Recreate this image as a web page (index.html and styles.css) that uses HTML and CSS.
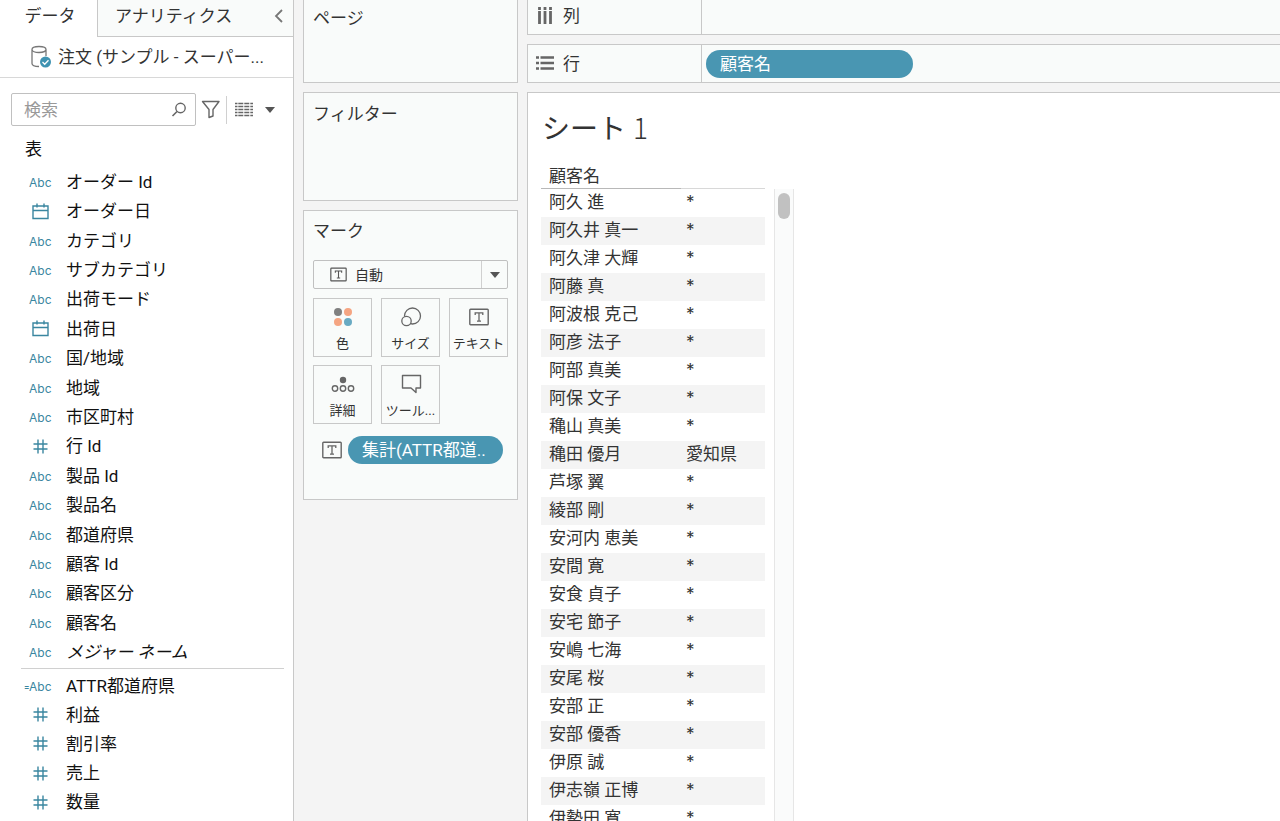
FILE: index.html
```html
<!DOCTYPE html>
<html lang="ja">
<head>
<meta charset="utf-8">
<title>シート 1</title>
<link rel="stylesheet" href="styles.css">
</head>
<body>
<svg class="sprite" aria-hidden="true">
  <symbol id="date" viewBox="0 0 17 17"><path d="M1 3h15v12.500h-15zM1 7.500h15M5 .5v4M12 .5v4" fill="none" stroke="currentColor" stroke-width="1.400"/></symbol>
  <symbol id="number" viewBox="0 0 17 17"><path d="M6 1.500v14M11 1.500v14M1.500 6h14M1.500 11h14" fill="none" stroke="currentColor" stroke-width="1.400"/></symbol>
  <symbol id="text" viewBox="0 0 20 18"><rect x=".8" y="1.300" width="18.400" height="15.400" rx=".8" fill="none" stroke="currentColor" stroke-width="1.400"/><path d="M6.200 7V4.800h7.600V7M10 4.800v8.400M8 13.200h4" fill="none" stroke="currentColor" stroke-width="1.300"/></symbol>
  <symbol id="caret" viewBox="0 0 10 6"><path d="M0 0h10L5 6z" fill="currentColor"/></symbol>
</svg>
<div class="app">
  <aside class="data-pane">
    <div class="tabs">
      <button class="tab tab-active" type="button">データ</button>
      <div class="tab-rest">
        <button class="tab" type="button">アナリティクス</button>
        <button class="collapse" type="button" aria-label="折りたたむ"><svg width="10" height="14" viewBox="0 0 10 14"><path d="M8 1L2 7l6 6" fill="none" stroke="#777" stroke-width="1.800"/></svg></button>
      </div>
    </div>
    <button class="source" type="button">
      <svg width="22" height="24" viewBox="0 0 22 24"><path d="M9 21.500C4 21.500 2 20 2 18.500V4.500C2 2.800 5 1.500 9 1.500s7 1.300 7 3-3 3-7 3-7-1.300-7-3M16 4.500V11" fill="none" stroke="#777" stroke-width="1.300"/><circle cx="15.500" cy="17" r="5.500" fill="#3f93b2"/><path d="M12.500 17l2.200 2.200 3.800-4" fill="none" stroke="#fff" stroke-width="1.300"/></svg>
      <span>注文 (サンプル - スーパー...</span>
    </button>
    <div class="tools">
      <label class="search"><input type="text" placeholder="検索" aria-label="検索"><svg width="16" height="16" viewBox="0 0 16 16"><circle cx="9.500" cy="6" r="4.700" fill="none" stroke="#666" stroke-width="1.400"/><path d="M6 9.500L1.500 14" stroke="#666" stroke-width="1.600"/></svg></label>
      <button class="filter" type="button" aria-label="フィルター"><svg width="20" height="19" viewBox="0 0 20 19"><path d="M1.500 1.500h16.500L12 9.500V16l-4 1.500v-8z" fill="none" stroke="#666" stroke-width="1.400" stroke-linejoin="round"/></svg></button>
      <button class="view" type="button" aria-label="表示"><svg width="18" height="15" viewBox="0 0 18 15"><path d="M0 1.500h18M0 4.500h18M0 7.500h18M0 10.500h18M0 13.500h18" stroke="#666" stroke-width="1.500" stroke-dasharray="2.500 .8 5 1 5 1 5 9"/></svg><svg class="gray" width="10" height="6"><use href="#caret"/></svg></button>
    </div>
    <h2 class="group">表</h2>
    <ul class="fields dimensions">
      <li><i>Abc</i>オーダー Id</li>
      <li><svg><use href="#date"/></svg>オーダー日</li>
      <li><i>Abc</i>カテゴリ</li>
      <li><i>Abc</i>サブカテゴリ</li>
      <li><i>Abc</i>出荷モード</li>
      <li><svg><use href="#date"/></svg>出荷日</li>
      <li><i>Abc</i>国/地域</li>
      <li><i>Abc</i>地域</li>
      <li><i>Abc</i>市区町村</li>
      <li><svg><use href="#number"/></svg>行 Id</li>
      <li><i>Abc</i>製品 Id</li>
      <li><i>Abc</i>製品名</li>
      <li><i>Abc</i>都道府県</li>
      <li><i>Abc</i>顧客 Id</li>
      <li><i>Abc</i>顧客区分</li>
      <li><i>Abc</i>顧客名</li>
      <li><i>Abc</i><em>メジャー ネーム</em></li>
    </ul>
    <ul class="fields measures">
      <li><i class="calc"><b>=</b>Abc</i>ATTR都道府県</li>
      <li><svg><use href="#number"/></svg>利益</li>
      <li><svg><use href="#number"/></svg>割引率</li>
      <li><svg><use href="#number"/></svg>売上</li>
      <li><svg><use href="#number"/></svg>数量</li>
    </ul>
  </aside>
  <section class="cards">
    <div class="card pages"><h3>ページ</h3></div>
    <div class="card filters"><h3>フィルター</h3></div>
    <div class="card marks">
      <h3>マーク</h3>
      <div class="mark-type">
        <svg width="17" height="15"><use href="#text"/></svg>
        <select aria-label="マーク"><option>自動</option></select>
        <span class="arrow"><svg width="10" height="6"><use href="#caret"/></svg></span>
      </div>
      <div class="mark-buttons">
        <button type="button"><svg width="20" height="22" viewBox="0 0 20 22"><circle cx="5" cy="6" r="4" fill="#808080"/><circle cx="15" cy="6" r="4" fill="#f5a582"/><circle cx="5" cy="16" r="4" fill="#f5a582"/><circle cx="15" cy="16" r="4" fill="#69aac3"/></svg>色</button>
        <button type="button"><svg width="22" height="22" viewBox="0 0 22 22"><circle cx="12.500" cy="10" r="8" fill="none" stroke="#666" stroke-width="1.300"/><circle cx="6.500" cy="15" r="4.700" fill="#f9fbfa" stroke="#666" stroke-width="1.300"/></svg>サイズ</button>
        <button type="button"><svg width="20" height="22"><use href="#text"/></svg>テキスト</button>
        <button type="button"><svg width="24" height="22" viewBox="0 0 24 22"><circle cx="12" cy="7" r="3.200" fill="#666"/><g fill="none" stroke="#666" stroke-width="1.400"><circle cx="4" cy="15.500" r="2.700"/><circle cx="12" cy="15.500" r="2.700"/><circle cx="20" cy="15.500" r="2.700"/></g></svg>詳細</button>
        <button type="button"><svg width="22" height="22" viewBox="0 0 22 22"><path d="M2.500 2.500h18v12.500h-4.500v4.500l-5-4.500h-8.500z" fill="none" stroke="#666" stroke-width="1.400" stroke-linejoin="round"/></svg>ツール...</button>
      </div>
      <div class="encoding">
        <svg width="20" height="18"><use href="#text"/></svg>
        <button class="pill" type="button">集計(ATTR都道..</button>
      </div>
    </div>
  </section>
  <main class="workspace">
    <div class="shelf columns">
      <div class="shelf-label"><svg width="18" height="18" viewBox="0 0 18 18"><path d="M3.500 0v3M9 0v3M14.500 0v3M3.500 4v13M9 4v13M14.500 4v13" stroke="#666" stroke-width="2.800"/></svg>列</div>
    </div>
    <div class="shelf rows">
      <div class="shelf-label"><svg width="18" height="18" viewBox="0 0 18 18"><path d="M0 2.500h3M4.500 2.500H18M0 8h3M4.500 8H18M0 13.500h3M4.500 13.500H18" stroke="#666" stroke-width="2.600"/></svg>行</div>
      <button class="pill" type="button">顧客名</button>
    </div>
    <div class="sheet">
      <h1>シート <span>1</span></h1>
      <div class="view-area">
        <table>
          <thead><tr><th>顧客名</th><th></th></tr></thead>
          <tbody>
            <tr><td>阿久 進</td><td>*</td></tr>
            <tr><td>阿久井 真一</td><td>*</td></tr>
            <tr><td>阿久津 大輝</td><td>*</td></tr>
            <tr><td>阿藤 真</td><td>*</td></tr>
            <tr><td>阿波根 克己</td><td>*</td></tr>
            <tr><td>阿彦 法子</td><td>*</td></tr>
            <tr><td>阿部 真美</td><td>*</td></tr>
            <tr><td>阿保 文子</td><td>*</td></tr>
            <tr><td>穐山 真美</td><td>*</td></tr>
            <tr><td>穐田 優月</td><td>愛知県</td></tr>
            <tr><td>芦塚 翼</td><td>*</td></tr>
            <tr><td>綾部 剛</td><td>*</td></tr>
            <tr><td>安河内 恵美</td><td>*</td></tr>
            <tr><td>安間 寛</td><td>*</td></tr>
            <tr><td>安食 貞子</td><td>*</td></tr>
            <tr><td>安宅 節子</td><td>*</td></tr>
            <tr><td>安嶋 七海</td><td>*</td></tr>
            <tr><td>安尾 桜</td><td>*</td></tr>
            <tr><td>安部 正</td><td>*</td></tr>
            <tr><td>安部 優香</td><td>*</td></tr>
            <tr><td>伊原 誠</td><td>*</td></tr>
            <tr><td>伊志嶺 正博</td><td>*</td></tr>
            <tr><td>伊勢田 寛</td><td>*</td></tr>
          </tbody>
        </table>
        <div class="scrollbar"><div class="thumb"></div></div>
      </div>
    </div>
  </main>
</div>
</body>
</html>
```
FILE: styles.css
```css
* { box-sizing: border-box; }
body {
  margin: 0;
  background: #f4f4f4;
  color: #333;
  font-family: Roboto, "Noto Sans CJK JP", sans-serif;
  font-size: 17px;
  line-height: 24px;
}
button, input, select { font: inherit; color: inherit; }
button { border: 0; background: none; padding: 0; }
h1, h2, h3, ul { margin: 0; padding: 0; font-weight: 400; font-size: 17px; }
svg { display: block; flex: none; }
.sprite { position: absolute; width: 0; height: 0; }

.app { display: flex; height: 100vh; overflow: hidden; }

.data-pane { flex: none; width: 294px; background: #fff; border-right: 1px solid #c8c8c8; }
.tabs { display: flex; height: 37px; }
.tab { padding-bottom: 5px; white-space: nowrap; }
.tab-active { width: 97px; padding-left: 3px; }
.tab-rest {
  flex: 1;
  display: flex;
  justify-content: space-between;
  padding: 0 9px 0 17px;
  background: #f9fbfa;
  border-left: 1px solid #c8c8c8;
  border-bottom: 1px solid #c8c8c8;
}
.collapse { padding-bottom: 5px; }
.source {
  display: flex;
  align-items: center;
  gap: 6px;
  width: 100%;
  height: 41px;
  padding-left: 30px;
  border-bottom: 1px solid #d8d8d8;
  white-space: nowrap;
}
.tools { display: flex; align-items: center; padding: 15px 0 0 11px; }
.search {
  display: flex;
  align-items: center;
  width: 185px;
  height: 33px;
  padding: 0 8px 0 12px;
  border: 1px solid #c0c0c0;
  border-radius: 2px;
}
.search input { flex: 1; min-width: 0; border: 0; outline: 0; padding: 0; background: none; }
.search input::placeholder { color: #999; opacity: 1; }
.filter { padding: 0 5px; }
.view {
  display: flex;
  align-items: center;
  gap: 12px;
  height: 28px;
  padding-left: 8px;
  border-left: 1px solid #d0d0d0;
  color: #555;
}
.group { padding: 11px 0 6px 25px; color: #111; }
.fields { display: grid; grid-auto-rows: 1fr; list-style: none; color: #111; }
.fields li { display: flex; align-items: center; white-space: nowrap; padding-left: 29px; }
.fields i { width: 37px; padding-top: 2px; font-family: Inter, sans-serif; font-size: 12px; font-style: normal; color: #3a86a0; }
.calc { display: flex; align-items: center; }
.fields .calc { width: 42px; margin-left: -5px; }
.calc b { width: 5px; font-size: 8px; }
.fields svg { width: 17px; height: 17px; margin: 0 17px 0 3px; color: #3a86a0; }
.dimensions { min-height: 500px; }
.measures { min-height: 149px; margin: 1px 9px 0 21px; padding-top: 2px; border-top: 1px solid #d0d0d0; }
.measures li { padding-left: 8px; }

.cards { flex: none; width: 215px; margin-left: 9px; display: flex; flex-direction: column; gap: 9px; }
.card { background: #f9fbfa; border: 1px solid #c8c8c8; padding: 8px 9px; }
.pages { height: 83px; border-top: 0; padding-top: 6px; }
.filters { height: 109px; padding-top: 9px; }
.marks { height: 290px; }
.marks h3 { padding-bottom: 17px; }
.mark-type {
  display: grid;
  grid-template-columns: 17px 1fr 26px;
  align-items: center;
  height: 29px;
  padding-left: 16px;
  border: 1px solid #c0c0c0;
  border-radius: 2px;
  color: #555;
}
.mark-type select {
  appearance: none;
  border: 0;
  background: none;
  padding: 0 0 0 8px;
  font-size: 14px;
  color: #333;
}
.arrow { display: grid; place-items: center; height: 100%; border-left: 1px solid #d0d0d0; }
.mark-buttons { display: grid; grid-template-columns: repeat(3, 1fr); gap: 8px 9px; padding-top: 9px; }
.mark-buttons button {
  display: flex;
  flex-direction: column;
  align-items: center;
  gap: 6px;
  height: 59px;
  padding-top: 7px;
  border: 1px solid #c8c8c8;
  font-size: 13px;
  line-height: 20px;
  white-space: nowrap;
}
.mark-buttons svg, .encoding svg { color: #666; }
.encoding { display: flex; align-items: center; gap: 6px; padding: 12px 5px 0 9px; }
.pill {
  height: 28px;
  padding: 0 14px;
  border-radius: 14px;
  background: #4996b2;
  color: #fff;
  text-align: left;
  white-space: nowrap;
}
.encoding .pill { flex: 1; }

.workspace { flex: 1; min-width: 0; margin-left: 9px; display: flex; flex-direction: column; }
.shelf {
  flex: none;
  display: flex;
  align-items: center;
  background: #f9fbfa;
  border: 1px solid #c8c8c8;
  border-right: 0;
}
.columns { height: 35px; margin-bottom: 9px; border-top: 0; }
.rows { height: 39px; margin-bottom: 9px; }
.shelf-label {
  display: flex;
  align-items: center;
  gap: 9px;
  align-self: stretch;
  width: 174px;
  padding-left: 8px;
  border-right: 1px solid #c8c8c8;
}
.columns .shelf-label { padding-bottom: 3px; }
.rows .pill { width: 207px; margin-left: 4px; }
.sheet {
  flex: 1;
  min-height: 0;
  overflow: hidden;
  display: flex;
  flex-direction: column;
  padding: 14px 0 0 13px;
  background: #fff;
  border: 1px solid #c8c8c8;
  border-width: 1px 0 0 1px;
}
h1 { flex: none; padding-left: 1px; font-size: 28px; line-height: 40px; }
h1 span { font-family: "Noto Sans CJK JP", sans-serif; font-weight: 300; }
.view-area { display: flex; }
table { width: 224px; table-layout: fixed; border-collapse: separate; border-spacing: 0; }
th, td { height: 28px; padding: 0 0 2px 8px; text-align: left; font-weight: 400; white-space: nowrap; line-height: 24px; }
th { height: 39px; padding: 14px 0 0 8px; border-bottom: 1px solid #d8d8d8; }
th:first-child { width: 140px; border-color: #b8b8b8; }
td + td { padding-left: 5px; font-family: Inter, "Noto Sans CJK JP", sans-serif; }
tbody tr:nth-child(even) { background: #f4f4f4; }
.scrollbar {
  width: 20px;
  margin: 39px 0 0 9px;
  padding: 4px 3px;
  background: #fafbfb;
  border: 1px solid #e6e6e6;
  border-width: 0 1px;
}
.thumb { height: 26px; border-radius: 6px; background: #c1c1c1; }
```
